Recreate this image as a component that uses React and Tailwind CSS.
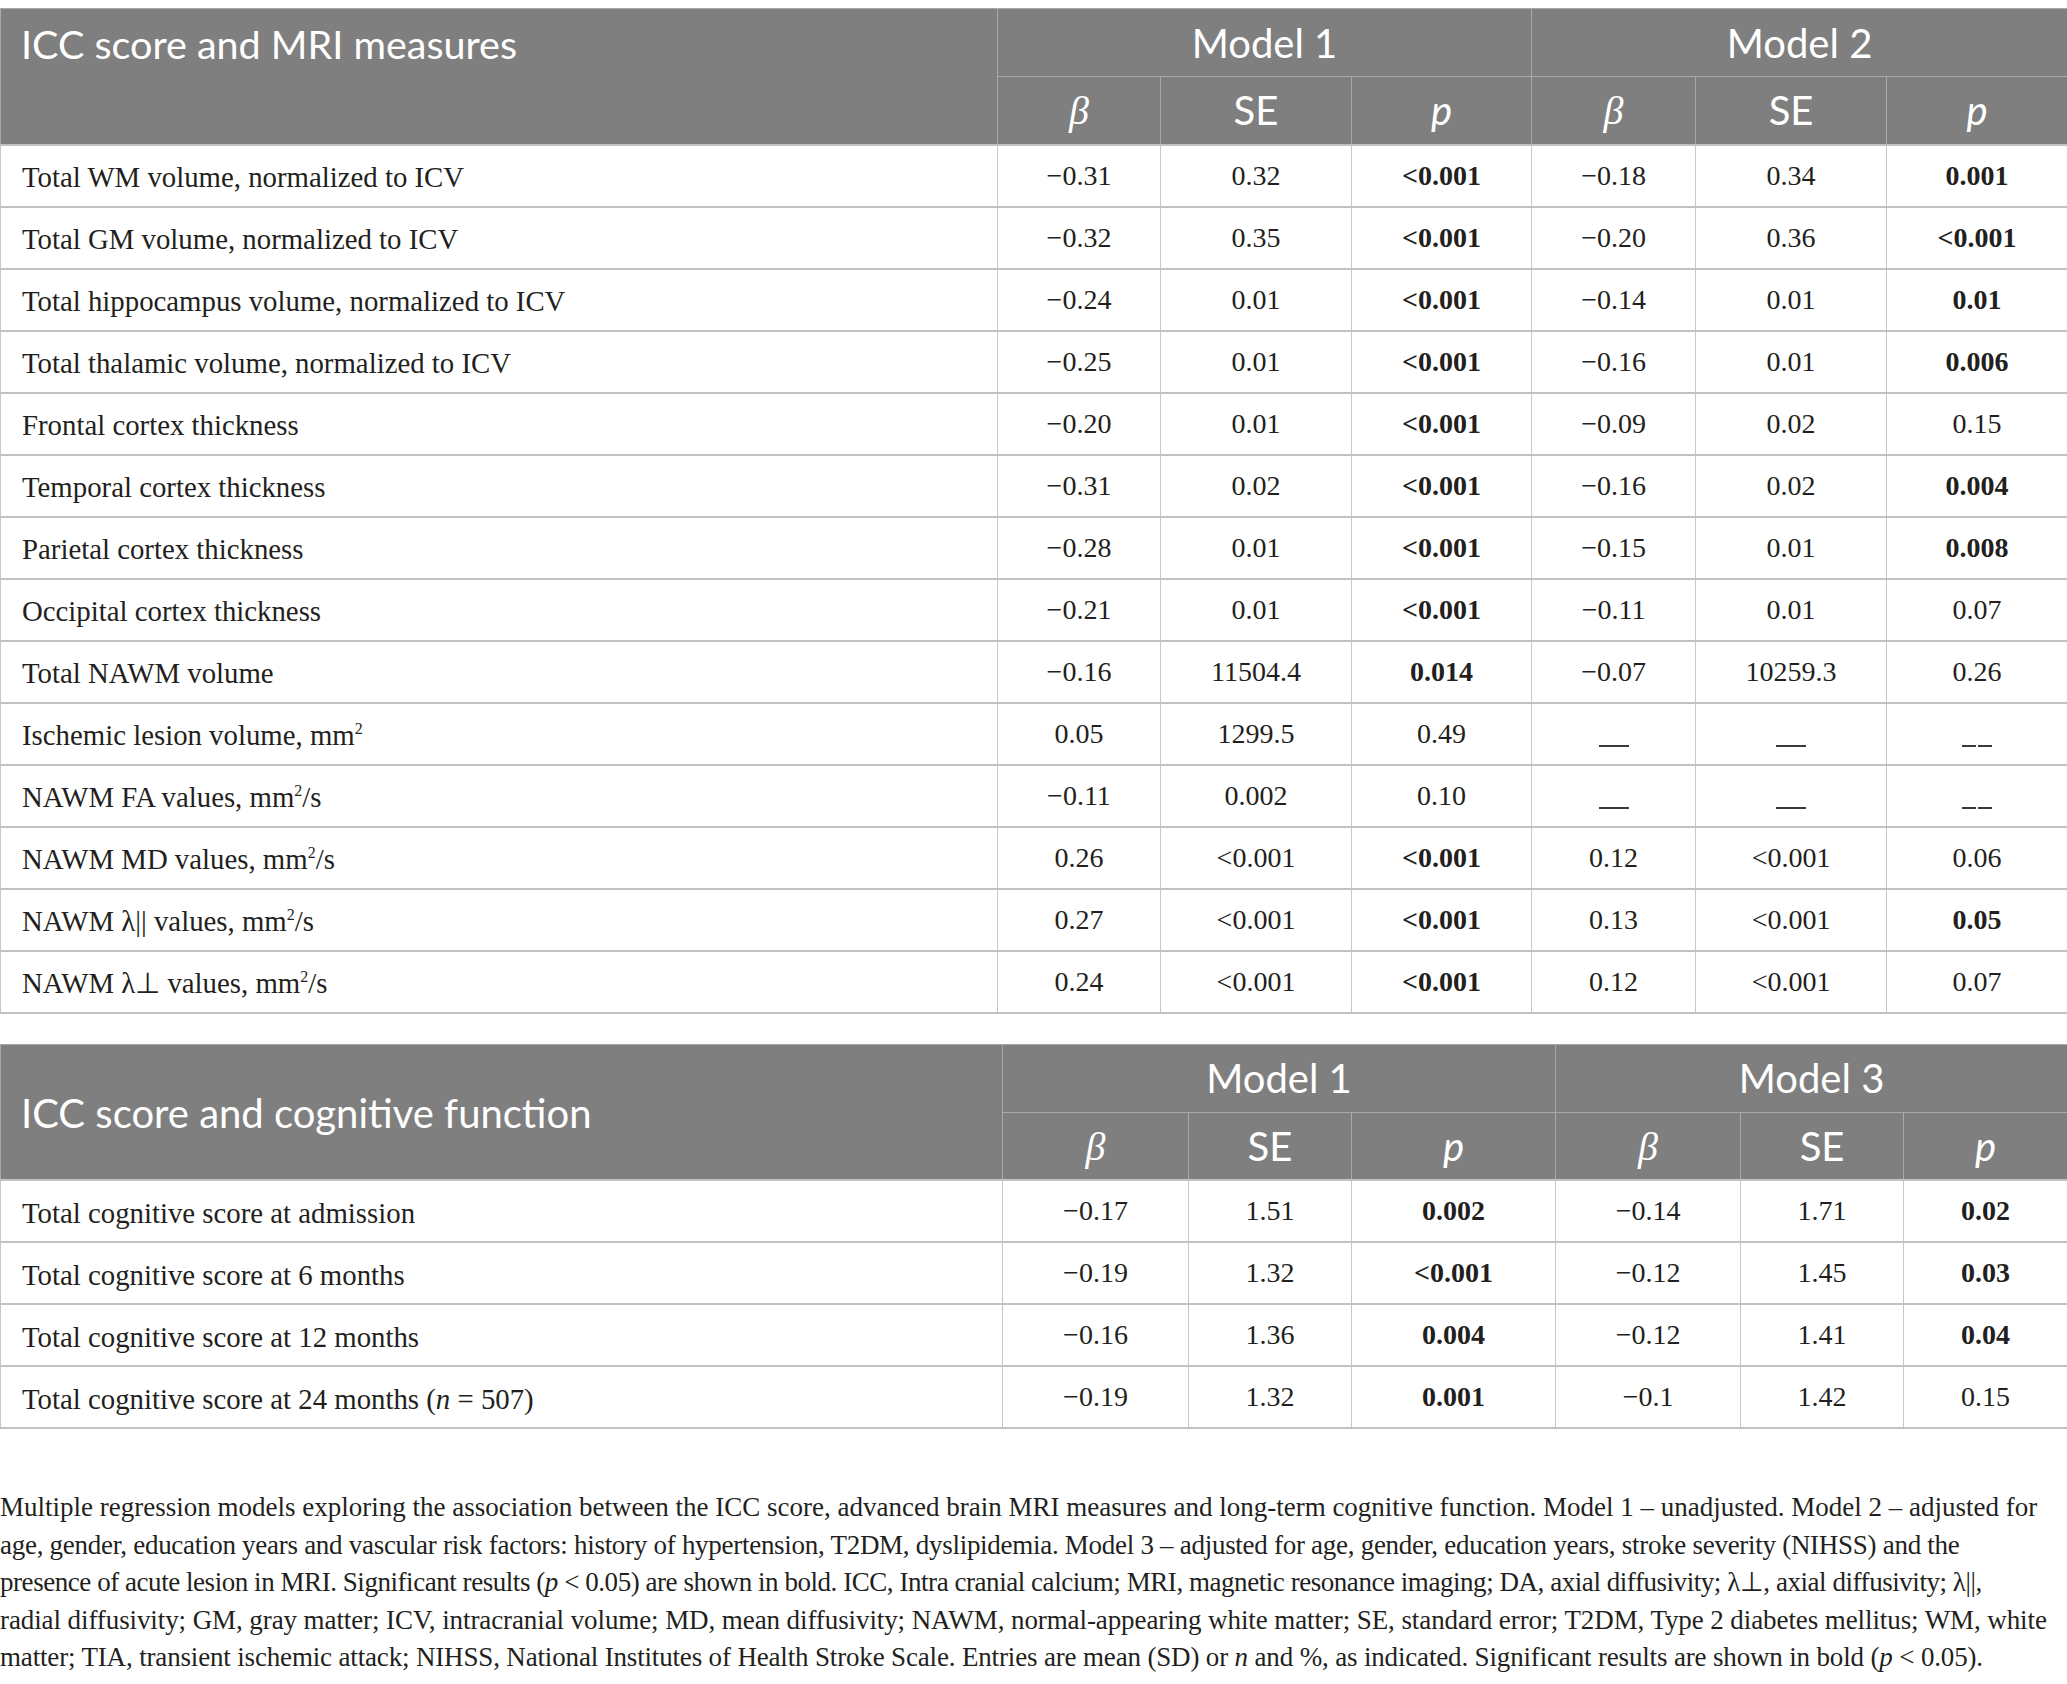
import React from "react";

const serif = "font-['Liberation_Serif','Times_New_Roman',serif]";
const sans = "font-['Lato','Open_Sans',sans-serif]";

const Sq = () => <sup className="text-[16px] relative -top-[11px]">2</sup>;

const mriRows = [
  ["Total WM volume, normalized to ICV", "−0.31", "0.32", "<0.001", "−0.18", "0.34", "0.001", [2, 5]],
  ["Total GM volume, normalized to ICV", "−0.32", "0.35", "<0.001", "−0.20", "0.36", "<0.001", [2, 5]],
  ["Total hippocampus volume, normalized to ICV", "−0.24", "0.01", "<0.001", "−0.14", "0.01", "0.01", [2, 5]],
  ["Total thalamic volume, normalized to ICV", "−0.25", "0.01", "<0.001", "−0.16", "0.01", "0.006", [2, 5]],
  ["Frontal cortex thickness", "−0.20", "0.01", "<0.001", "−0.09", "0.02", "0.15", [2]],
  ["Temporal cortex thickness", "−0.31", "0.02", "<0.001", "−0.16", "0.02", "0.004", [2, 5]],
  ["Parietal cortex thickness", "−0.28", "0.01", "<0.001", "−0.15", "0.01", "0.008", [2, 5]],
  ["Occipital cortex thickness", "−0.21", "0.01", "<0.001", "−0.11", "0.01", "0.07", [2]],
  ["Total NAWM volume", "−0.16", "11504.4", "0.014", "−0.07", "10259.3", "0.26", [2]],
  [<>Ischemic lesion volume, mm<Sq /></>, "0.05", "1299.5", "0.49", "dash", "dash", "dash2", []],
  [<>NAWM FA values, mm<Sq />/s</>, "−0.11", "0.002", "0.10", "dash", "dash", "dash2", []],
  [<>NAWM MD values, mm<Sq />/s</>, "0.26", "<0.001", "<0.001", "0.12", "<0.001", "0.06", [2]],
  [<>NAWM λ|| values, mm<Sq />/s</>, "0.27", "<0.001", "<0.001", "0.13", "<0.001", "0.05", [2, 5]],
  [<>NAWM λ⊥ values, mm<Sq />/s</>, "0.24", "<0.001", "<0.001", "0.12", "<0.001", "0.07", [2]],
];

const cogRows = [
  ["Total cognitive score at admission", "−0.17", "1.51", "0.002", "−0.14", "1.71", "0.02", [2, 5]],
  ["Total cognitive score at 6 months", "−0.19", "1.32", "<0.001", "−0.12", "1.45", "0.03", [2, 5]],
  ["Total cognitive score at 12 months", "−0.16", "1.36", "0.004", "−0.12", "1.41", "0.04", [2, 5]],
  [<>Total cognitive score at 24 months (<i>n</i> = 507)</>, "−0.19", "1.32", "0.001", "−0.1", "1.42", "0.15", [2]],
];

const Dash = ({ double }) =>
  double ? (
    <span className="inline-flex gap-[2px] align-baseline">
      <span className="inline-block w-[14px] h-[2px] bg-[#3a3a3a] translate-y-[4px]" />
      <span className="inline-block w-[14px] h-[2px] bg-[#3a3a3a] translate-y-[4px]" />
    </span>
  ) : (
    <span className="inline-block w-[30px] h-[2px] bg-[#3a3a3a] align-baseline translate-y-[4px]" />
  );

const Cell = ({ value, bold }) => (
  <td className={`border-x border-y-2 border-x-[#c6c6c6] border-y-[#c2c2c2] text-center ${bold ? "font-bold" : ""}`}>
    {value === "dash" ? <Dash /> : value === "dash2" ? <Dash double /> : value}
  </td>
);

const Body = ({ rows }) => (
  <tbody className={`${serif} text-[28px] text-[#231f20]`}>
    {rows.map((r, i) => (
      <tr key={i} className="h-[62px]">
        <td className="border-x border-y-2 border-x-[#c6c6c6] border-y-[#c2c2c2] pl-[21px] pt-[5px] text-[28.8px]">{r[0]}</td>
        {r.slice(1, 7).map((v, j) => (
          <Cell key={j} value={v} bold={r[7].includes(j)} />
        ))}
      </tr>
    ))}
  </tbody>
);

const hd = "border border-[#a9a9a9] text-center";

const SubHeads = () =>
  [0, 1].map((k) => (
    <React.Fragment key={k}>
      <th className={`${hd} font-normal`}>
        <span className={`${serif} italic`}>β</span>
      </th>
      <th className={`${hd} font-normal`}>SE</th>
      <th className={`${hd} font-normal italic`}>p</th>
    </React.Fragment>
  ));

export default function App() {
  return (
    <div className="w-[2067px] bg-white pt-[8px]">
      <table className="w-[2067px] table-fixed border-collapse">
        <colgroup>
          <col className="w-[997px]" />
          <col className="w-[163px]" />
          <col className="w-[191px]" />
          <col className="w-[180px]" />
          <col className="w-[164px]" />
          <col className="w-[191px]" />
          <col className="w-[181px]" />
        </colgroup>
        <thead className={`${sans} text-[40px] text-white bg-[#7f7f7f]`}>
          <tr className="h-[68px]">
            <th rowSpan={2} className={`${hd} text-left align-top font-normal pl-[20px] pt-[5px] text-[39.5px]`}>
              ICC score and MRI measures
            </th>
            <th colSpan={3} className={`${hd} font-normal`}>Model 1</th>
            <th colSpan={3} className={`${hd} font-normal`}>Model 2</th>
          </tr>
          <tr className="h-[68px]">
            <SubHeads />
          </tr>
        </thead>
        <Body rows={mriRows} />
      </table>

      <table className="w-[2067px] table-fixed border-collapse mt-[30px]">
        <colgroup>
          <col className="w-[1002px]" />
          <col className="w-[186px]" />
          <col className="w-[163px]" />
          <col className="w-[204px]" />
          <col className="w-[185px]" />
          <col className="w-[163px]" />
          <col className="w-[164px]" />
        </colgroup>
        <thead className={`${sans} text-[40px] text-white bg-[#7f7f7f]`}>
          <tr className="h-[68px]">
            <th rowSpan={2} className={`${hd} text-left align-middle font-normal pl-[20px] pt-[2px]`}>
              ICC score and cognitive function
            </th>
            <th colSpan={3} className={`${hd} font-normal`}>Model 1</th>
            <th colSpan={3} className={`${hd} font-normal`}>Model 3</th>
          </tr>
          <tr className="h-[68px]">
            <SubHeads />
          </tr>
        </thead>
        <Body rows={cogRows} />
      </table>

      <div className={`${serif} text-[27px] leading-[37.5px] text-[#231f20] mt-[60px] whitespace-nowrap`}>
        <div>Multiple regression models exploring the association between the ICC score, advanced brain MRI measures and long-term cognitive function. Model 1 – unadjusted. Model 2 – adjusted for</div>
        <div className="tracking-[-0.28px]">age, gender, education years and vascular risk factors: history of hypertension, T2DM, dyslipidemia. Model 3 – adjusted for age, gender, education years, stroke severity (NIHSS) and the</div>
        <div className="tracking-[-0.45px]">presence of acute lesion in MRI. Significant results (<i>p</i> &lt; 0.05) are shown in bold. ICC, Intra cranial calcium; MRI, magnetic resonance imaging; DA, axial diffusivity; λ⊥, axial diffusivity; λ||,</div>
        <div className="tracking-[-0.09px]">radial diffusivity; GM, gray matter; ICV, intracranial volume; MD, mean diffusivity; NAWM, normal-appearing white matter; SE, standard error; T2DM, Type 2 diabetes mellitus; WM, white</div>
        <div className="tracking-[-0.16px]">matter; TIA, transient ischemic attack; NIHSS, National Institutes of Health Stroke Scale. Entries are mean (SD) or <i>n</i> and %, as indicated. Significant results are shown in bold (<i>p</i> &lt; 0.05).</div>
      </div>
    </div>
  );
}
